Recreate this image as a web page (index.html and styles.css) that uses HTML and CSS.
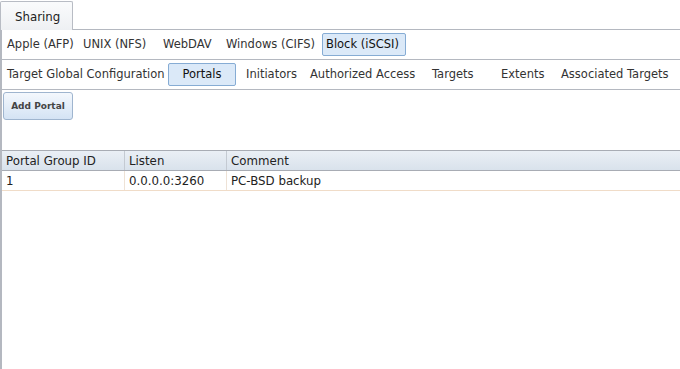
FILE: index.html
```html
<!DOCTYPE html>
<html>
<head>
<meta charset="utf-8">
<link rel="stylesheet" href="styles.css">
</head>
<body>
<div class="app">
  <div class="tabbar">
    <div class="tab">Sharing</div>
    <div class="tabfill"></div>
  </div>
  <div class="panel">
    <div class="subtabs row1">
      <span class="st w-afp">Apple (AFP)</span>
      <span class="st w-nfs">UNIX (NFS)</span>
      <span class="st w-dav">WebDAV</span>
      <span class="st w-cifs">Windows (CIFS)</span>
      <span class="st sel w-iscsi">Block (iSCSI)</span>
    </div>
    <div class="subtabs row2">
      <span class="st w-tgc">Target Global Configuration</span>
      <span class="st sel w-portals">Portals</span>
      <span class="st w-init">Initiators</span>
      <span class="st w-auth">Authorized Access</span>
      <span class="st w-targets">Targets</span>
      <span class="st w-extents">Extents</span>
      <span class="st">Associated Targets</span>
    </div>
    <div class="toolbar">
      <button class="btn">Add Portal</button>
    </div>
    <div class="grid">
      <div class="ghead">
        <div class="c c1">Portal Group ID</div>
        <div class="c c2">Listen</div>
        <div class="c c3">Comment</div>
      </div>
      <div class="grow">
        <div class="c c1">1</div>
        <div class="c c2">0.0.0.0:3260</div>
        <div class="c c3">PC-BSD backup</div>
      </div>
    </div>
  </div>
</div>
</body>
</html>
```
FILE: styles.css
```css
html, body { margin: 0; padding: 0; background: #fff; }
body {
  font-family: "DejaVu Sans", Verdana, sans-serif;
  font-size: 11.5px;
  color: #333;
  width: 680px;
  height: 369px;
  overflow: hidden;
}
.app { height: 369px; display: flex; flex-direction: column; }
.tabbar { display: flex; height: 30px; align-items: flex-end; }
.tab {
  width: 73px;
  height: 29px;
  box-sizing: border-box;
  border: 1px solid #b8bcc4;
  border-bottom: none;
  border-radius: 2px 2px 0 0;
  background: linear-gradient(#fafbfc, #eef0f3);
  font-size: 11.8px;
  color: #222;
  padding: 8px 0 0 14px;
}
.tabfill { flex: 1; border-bottom: 1px solid #b4b8c0; }
.panel {
  flex: 1;
  border-left: 2px solid #b4b8c0;
  display: flex;
  flex-direction: column;
}
.subtabs {
  display: flex;
  align-items: center;
  border-bottom: 1px solid #b4b8c0;
  height: 30px;
  box-sizing: border-box;
  padding-left: 4px;
}
.st {
  flex: none;
  font-size: 11.5px;
  color: #333;
  white-space: nowrap;
  height: 23px;
  line-height: 21px;
  box-sizing: border-box;
  border: 1px solid transparent;
  border-radius: 2px;
}
.st.sel {
  background: #dbe9f8;
  border-color: #86acd4;
  color: #111;
}
.w-afp { width: 76px; }
.w-nfs { width: 80px; }
.w-dav { width: 63px; }
.w-cifs { width: 97px; }
.w-iscsi { width: 84px; padding-left: 3px; }
.w-tgc { width: 162px; }
.w-portals { width: 68px; text-align: center; margin-right: 9px; }
.w-init { width: 64px; }
.w-auth { width: 122px; }
.w-targets { width: 69px; }
.w-extents { width: 60px; }
.toolbar {
  padding: 2px 0 0 1px;
  height: 60px;
  box-sizing: border-box;
}
.btn {
  font-family: "DejaVu Sans", Verdana, sans-serif;
  font-size: 9px;
  font-weight: bold;
  color: #444;
  width: 70px;
  height: 28px;
  border: 1px solid #9fb5cf;
  border-radius: 3px;
  background: linear-gradient(#f4f8fd, #d4e3f4);
  padding: 0;
  margin: 0;
}
.grid { display: flex; flex-direction: column; }
.ghead {
  display: flex;
  height: 21px;
  box-sizing: border-box;
  border-top: 1px solid #a8acb4;
  border-bottom: 1px solid #a8acb4;
  background: linear-gradient(#eaeff5, #d9e2ec);
}
.grow {
  display: flex;
  height: 20px;
  box-sizing: border-box;
  border-bottom: 1px solid #f0dcc8;
}
.c {
  box-sizing: border-box;
  padding: 1px 0 0 4px;
  line-height: 18px;
  color: #222;
  font-size: 11.8px;
  white-space: nowrap;
}
.ghead .c { border-right: 1px solid #c4cad2; }
.grow .c { border-right: 1px solid #eee2d6; }
.c1 { width: 123px; }
.c2 { width: 102px; }
.c3 { flex: 1; border-right: none !important; }
```
